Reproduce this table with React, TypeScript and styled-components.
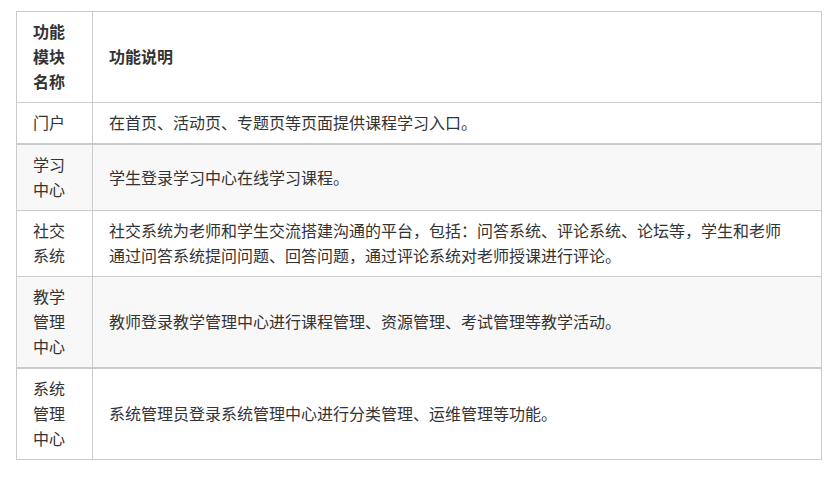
import React from "react";
import styled, { createGlobalStyle } from "styled-components";

const Global = createGlobalStyle`
  html, body { margin: 0; padding: 0; background: #fff; }
  body { font-family: "Noto Sans CJK SC", "Noto Sans", sans-serif; color: #333; }
`;

const Page = styled.div`
  padding: 11px 0 0 16px;
`;

const Table = styled.table`
  width: 806px;
  border-collapse: collapse;
  font-size: 16px;
  line-height: 25px;
  color: #333;
`;

const Row = styled.tr<{ $stripe?: boolean; $thick?: boolean }>`
  background: ${(p) => (p.$stripe ? "#f8f8f8" : "#fff")};
  border-top: ${(p) => (p.$thick ? "2px" : "1px")} solid #cbcbcb;
`;

const Cell = styled.td<{ $name?: boolean }>`
  border: 1px solid #cbcbcb;
  padding: 7px ${(p) => (p.$name ? "16px" : "36px")} 8px 16px;
  text-align: left;
  vertical-align: middle;
  width: ${(p) => (p.$name ? "43px" : "auto")};
  word-break: break-all;
`;

const HeadCell = styled(Cell).attrs({ as: "th" })`
  font-weight: bold;
`;

const rows = [
  { name: "门户", desc: "在首页、活动页、专题页等页面提供课程学习入口。" },
  { name: "学习中心", desc: "学生登录学习中心在线学习课程。", stripe: true, thick: true },
  {
    name: "社交系统",
    desc: "社交系统为老师和学生交流搭建沟通的平台，包括：问答系统、评论系统、论坛等，学生和老师通过问答系统提问问题、回答问题，通过评论系统对老师授课进行评论。",
  },
  { name: "教学管理中心", desc: "教师登录教学管理中心进行课程管理、资源管理、考试管理等教学活动。", stripe: true },
  { name: "系统管理中心", desc: "系统管理员登录系统管理中心进行分类管理、运维管理等功能。", thick: true },
];

export default function App() {
  return (
    <Page>
      <Global />
      <Table>
        <thead>
          <Row>
            <HeadCell $name>功能模块名称</HeadCell>
            <HeadCell>功能说明</HeadCell>
          </Row>
        </thead>
        <tbody>
          {rows.map((r) => (
            <Row key={r.name} $stripe={r.stripe} $thick={r.thick}>
              <Cell $name>{r.name}</Cell>
              <Cell>{r.desc}</Cell>
            </Row>
          ))}
        </tbody>
      </Table>
    </Page>
  );
}
